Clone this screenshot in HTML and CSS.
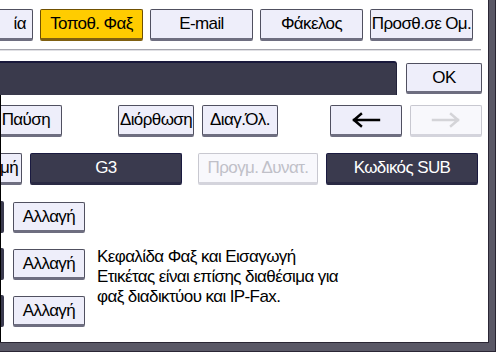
FILE: index.html
```html
<!DOCTYPE html>
<html>
<head>
<meta charset="utf-8">
<link rel="stylesheet" href="styles.css">
</head>
<body>
<div class="frame">
  <div class="screen">
    <div class="row row-tabs">
      <div class="btn tab tab-first">ία</div>
      <div class="btn tab active">Τοποθ. Φαξ</div>
      <div class="btn tab">E-mail</div>
      <div class="btn tab">Φάκελος</div>
      <div class="btn tab">Προσθ.σε Ομ.</div>
    </div>
    <div class="divider"></div>
    <div class="row row-input">
      <div class="input-bar"></div>
      <div class="btn ok">OK</div>
    </div>
    <div class="lower">
      <div class="row row-edit">
        <div class="btn pause">Παύση</div>
        <div class="btn edit">Διόρθωση</div>
        <div class="btn clear">Διαγ.Όλ.</div>
        <div class="btn arrow left">
          <svg width="30" height="16" viewBox="0 0 30 16"><path d="M3 8H28M3 8L10 2M3 8L10 14" stroke="#000" stroke-width="2.4" fill="none" stroke-linecap="square"/></svg>
        </div>
        <div class="btn arrow right disabled">
          <svg width="30" height="16" viewBox="0 0 30 16"><path d="M2 8H27M27 8L20 2M27 8L20 14" stroke="#d4d4d8" stroke-width="2.4" fill="none" stroke-linecap="square"/></svg>
        </div>
      </div>
      <div class="row row-mode">
        <div class="btn mode-first">μή</div>
        <div class="btn dark g3">G3</div>
        <div class="btn disabled prog">Προγμ. Δυνατ.</div>
        <div class="btn dark sub">Κωδικός SUB</div>
      </div>
      <div class="settings">
        <div class="change-col">
          <div class="change-row"><div class="stub"></div><div class="btn change">Αλλαγή</div></div>
          <div class="change-row"><div class="stub"></div><div class="btn change">Αλλαγή</div></div>
          <div class="change-row"><div class="stub"></div><div class="btn change">Αλλαγή</div></div>
        </div>
        <p class="note">Κεφαλίδα Φαξ και Εισαγωγή<br>Ετικέτας είναι επίσης διαθέσιμα για<br>φαξ διαδικτύου και IP-Fax.</p>
      </div>
    </div>
  </div>
</div>
</body>
</html>
```
FILE: styles.css
```css
html, body {
  margin: 0;
  padding: 0;
  background: #000;
}
.frame {
  width: 496px;
  height: 352px;
  background: #5a5866;
  overflow: hidden;
  box-shadow: inset -1px -1px 0 #2a2634;
}
.screen {
  width: 488px;
  height: 342px;
  background: #fff;
  border-right: 1px solid #2a2634;
  border-bottom: 1px solid #2a2634;
  overflow: hidden;
  font-family: "Liberation Sans", Arial, sans-serif;
  letter-spacing: -0.6px;
  color: #000;
}
.lower {
  position: relative;
}
.lower::before {
  content: "";
  position: absolute;
  left: 0;
  top: 0;
  width: 1px;
  height: 260px;
  background: #000;
  z-index: 2;
}
.row {
  display: flex;
  align-items: flex-start;
}
.btn {
  box-sizing: border-box;
  display: flex;
  align-items: center;
  justify-content: center;
  background: #eeeefa;
  border: 1px solid #505060;
  border-bottom: 3px solid #6e6e80;
  border-radius: 2px;
  font-size: 17px;
  white-space: nowrap;
  flex: none;
}
.row-tabs {
  margin-top: 9px;
  gap: 7px;
}
.tab {
  width: 103px;
  height: 32px;
}
.tab-first {
  width: 80px;
  margin-left: -47px;
  justify-content: flex-end;
  padding-right: 6px;
}
.tab.active {
  background: #ffcc00;
  border-color: #705000;
  border-bottom-color: #806010;
}
.divider {
  margin-top: 8px;
  width: 481px;
  height: 1px;
  background: #a8a8b0;
  border-bottom: 1px solid #e0e0e4;
}
.row-input {
  margin-top: 10px;
  height: 34px;
}
.input-bar {
  width: 397px;
  height: 34px;
  box-sizing: border-box;
  background: #3a3a4c;
  border-top: 2px solid #18183a;
  border-right: 1px solid #22223a;
  border-radius: 0 3px 0 0;
}
.ok {
  margin-top: 2px;
  margin-left: 9px;
  width: 76px;
  height: 31px;
}
.row-edit {
  padding-top: 10px;
  height: 32px;
}
.row-edit .btn {
  height: 32px;
}
.pause {
  width: 80px;
  margin-left: -18px;
  justify-content: flex-end;
  padding-right: 11px;
}
.edit {
  width: 76px;
  margin-left: 56px;
}
.clear {
  width: 76px;
  margin-left: 8px;
}
.arrow {
  width: 72px;
  margin-left: 52px;
}
.arrow.right {
  margin-left: 8px;
}
.row-mode {
  margin-top: 16px;
  height: 32px;
}
.row-mode .btn {
  height: 32px;
}
.mode-first {
  width: 60px;
  margin-left: -38px;
  justify-content: flex-end;
  padding-right: 3px;
}
.dark {
  background: #3a3a4e;
  border-color: #1a1a40;
  border-bottom-color: #2a2a44;
  color: #fff;
}
.g3 {
  width: 152px;
  margin-left: 8px;
}
.prog {
  width: 120px;
  margin-left: 16px;
}
.disabled {
  background: #f8f8fc;
  border-color: #c8c8d0;
  border-bottom-color: #d4d4dc;
  color: #c0c0c8;
}
.sub {
  width: 152px;
  margin-left: 8px;
}
.settings {
  display: flex;
  margin-top: 16px;
}
.change-col {
  display: flex;
  flex-direction: column;
  gap: 15px;
}
.change-row {
  display: flex;
  align-items: flex-start;
  height: 32px;
}
.stub {
  width: 4px;
  height: 32px;
  background: #3a3a4e;
  border-radius: 0 2px 2px 0;
}
.change {
  width: 72px;
  height: 31px;
  margin-top: 1px;
  margin-left: 9px;
}
.note {
  margin: 46px 0 0 12px;
  font-size: 17px;
  line-height: 20px;
}
```
